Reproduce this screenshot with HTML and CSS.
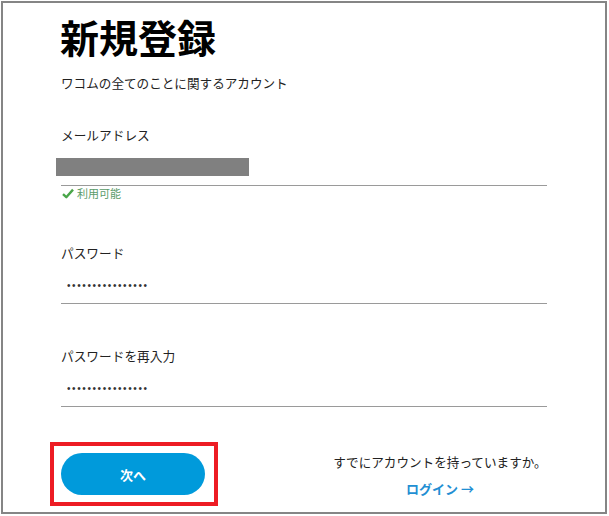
FILE: index.html
```
<!DOCTYPE html>
<html lang="ja">
<head>
    <meta charset="UTF-8">
    <meta name="viewport" content="width=device-width, initial-scale=1.0">
    <title>新規登録</title>
    <link rel="stylesheet" href="styles.css">
</head>
<body>
    <div class="frame">
        <h1 class="title">新規登録</h1>
        <p class="lead">ワコムの全てのことに関するアカウント</p>

        <form class="signup" onsubmit="return false">
            <div class="field field-email">
                <label class="label" for="email">メールアドレス</label>
                <div class="input-line">
                    <span class="masked" id="email"></span>
                </div>
                <div class="status">
                    <svg class="check" width="12" height="11" viewBox="0 0 12 11">
                        <path d="M1 6.2 L4.3 9.2 L11 1.6" fill="none" stroke="#4aa64a" stroke-width="2.4" stroke-linejoin="round"/>
                    </svg>
                    <span>利用可能</span>
                </div>
            </div>

            <div class="field">
                <label class="label" for="password">パスワード</label>
                <div class="input-line">
                    <input class="input" type="password" id="password" value="abcdefghijklmnop">
                </div>
            </div>

            <div class="field">
                <label class="label" for="password2">パスワードを再入力</label>
                <div class="input-line">
                    <input class="input" type="password" id="password2" value="abcdefghijklmnop">
                </div>
            </div>

            <div class="actions">
                <div class="highlight">
                    <button class="btn-next" type="submit">次へ</button>
                </div>
                <div class="login">
                    <p>すでにアカウントを持っていますか。</p>
                    <a href="#" class="login-link">ログイン →</a>
                </div>
            </div>
        </form>
    </div>
</body>
</html>
```

FILE: styles.css
```
* {
    box-sizing: border-box;
}
body {
    margin: 0;
    font-family: "Noto Sans CJK JP", "Noto Sans", sans-serif;
    color: #222;
    background: #fff;
}
.frame {
    width: 606px;
    height: 513px;
    margin: 1px 0 0 1px;
    border: 2px solid #858585;
    padding: 7px 0 0 58px;
}
.title {
    margin: 0 0 0 -1px;
    font-size: 39px;
    font-weight: bold;
    line-height: 52px;
    color: #000;
}
.lead {
    margin: 11px 0 0;
    font-size: 12.6px;
    line-height: 20px;
}
.signup {
    width: 486px;
    margin-top: 32px;
}
.field {
    margin-bottom: 42px;
}
.label {
    display: block;
    font-size: 12.7px;
    line-height: 20px;
}
.input-line {
    height: 41px;
    border-bottom: 1px solid #9a9a9a;
    display: flex;
    align-items: center;
}
.field-email .input-line {
    align-items: flex-start;
    padding-top: 13px;
}
.masked {
    display: block;
    width: 193px;
    height: 18px;
    margin-left: -5px;
    background: #808080;
}
.input {
    width: 100%;
    border: none;
    outline: none;
    padding: 4px 0 0 6px;
    font-family: "Liberation Sans", sans-serif;
    font-size: 10px;
    letter-spacing: 1.6px;
    color: #333;
    background: transparent;
}
.status {
    display: flex;
    align-items: center;
    gap: 3px;
    margin-top: -1px;
    padding-left: 1px;
    font-size: 11px;
    line-height: 16px;
    color: #5a9c6a;
}
.actions {
    display: flex;
    justify-content: space-between;
    align-items: flex-start;
    margin-top: -7px;
}
.highlight {
    margin-left: -11px;
    border: 4px solid #ed1c24;
    padding: 7px 9px 7px 7px;
}
.btn-next {
    display: block;
    width: 144px;
    height: 42px;
    border: none;
    border-radius: 21px;
    background: #009adb;
    color: #fff;
    font-family: inherit;
    font-size: 13px;
    font-weight: bold;
    cursor: pointer;
}
.login {
    width: 214px;
    text-align: center;
    padding-top: 10px;
}
.login p {
    margin: 0;
    font-size: 12.6px;
    line-height: 20px;
}
.login-link {
    display: inline-block;
    margin-top: 7px;
    font-size: 13px;
    font-weight: bold;
    line-height: 20px;
    color: #1f8fd3;
    text-decoration: none;
}
```
